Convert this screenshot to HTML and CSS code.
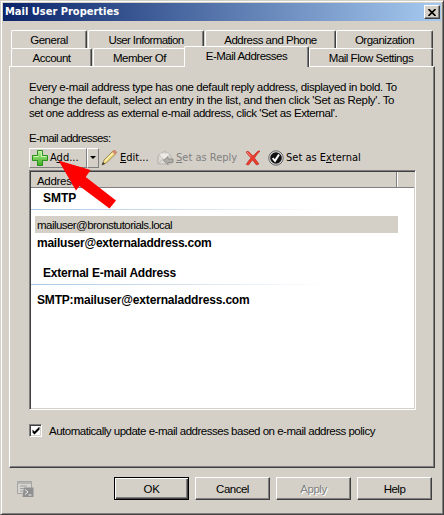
FILE: index.html
```html
<!DOCTYPE html>
<html lang="en">
<head>
<meta charset="utf-8">
<title>Mail User Properties</title>
<link rel="stylesheet" href="styles.css">
</head>
<body>
<main class="window">
  <header class="titlebar"><h1>Mail User Properties</h1>
    <button class="close" aria-label="Close"><svg width="8" height="7" viewBox="0 0 8 7"><path d="M0.5 0L7.5 7M7.5 0L.5 7" stroke="#000" stroke-width="1.6"/></svg></button>
  </header>
  <nav class="tabs">
    <div class="tab-row back">
      <div class="tab general">General</div><div class="tab info">User Information</div><div class="tab phone">Address and Phone</div><div class="tab org">Organization</div>
    </div>
    <div class="tab-row front">
      <div class="tab account">Account</div><div class="tab member">Member Of</div><div class="tab active">E-Mail Addresses</div><div class="tab flow">Mail Flow Settings</div>
    </div>
  </nav>
  <section class="panel">
    <p class="intro"><span class="l1">Every e-mail address type has one default reply address, displayed in bold. To</span><br><span class="l2">change the default, select an entry in the list, and then click 'Set as Reply'. To</span><br><span class="l3">set one address as external e-mail address, click 'Set as External'.</span></p>
    <div class="list-label">E-mail addresses:</div>
    <div class="toolbar">
      <div class="add"><svg width="18" height="18" viewBox="0 0 18 18"><defs><linearGradient id="g" x2="0" y2="1"><stop stop-color="#b8ef91"/><stop offset="1" stop-color="#3dad25"/></linearGradient></defs><path d="M6.5 1.5h5v5h5v5h-5v5h-5v-5h-5v-5h5z" fill="url(#g)" stroke="#279318"/><path d="M7.6 2.6h2.8v5h5M2.6 7.6h5" fill="none" stroke="#d5f7bb"/></svg><span>A<u>d</u>d...</span></div>
      <div class="split"></div>
      <div class="edit"><svg width="17" height="17" viewBox="0 0 17 17"><path d="M1 16L3 11L12.5 1.5Q15 .8 15.5 4L5.8 13.5z" fill="#f3dc83" stroke="#8c7843" stroke-width=".8"/><path d="M4 12L12.5 3.5" stroke="#fff8c8"/><path d="M12.5 1.5Q15 .8 15.5 4L14 5.5L11 3z" fill="#d78a72"/><path d="M1 16l1-3 2 2z" fill="#333"/></svg><span><u>E</u>dit...</span></div>
      <div class="reply"><svg width="17" height="15" viewBox="0 0 17 15"><path d="M1 6L7.5 1L14 6V14H1z" fill="#dedbd5" stroke="#b4b1aa"/><path d="M3 6V3h9v4L7.5 10z" fill="#eceae5" stroke="#c4c1ba" stroke-width=".7"/><path d="M1 14l5-5 3 2" fill="none" stroke="#bbb"/><path d="M6.5 10.5L11 6.5V9h5v3.5h-5v2z" fill="#b0afab" stroke="#85847f" stroke-width=".8"/></svg><span><u>S</u>et as Reply</span></div>
      <div class="delete"><svg width="16" height="16" viewBox="0 0 16 16"><path d="M1 2Q3 0 5 3L8 6L13 1L15 1Q12 4 9.5 8L14 14L11.5 15L7.5 10L3.5 15L1.2 14.5Q3 11 6 8Q3 5 1 2z" fill="#eb3b2e" stroke="#b9271d" stroke-width=".6"/><path d="M2 2l4 4.5" stroke="#ff9b8b"/></svg></div>
      <div class="external"><svg width="16" height="16" viewBox="0 0 16 16"><circle cx="8" cy="8" r="7.2" fill="#ddd" stroke="#646464"/><circle cx="8" cy="8" r="5.8" fill="#111"/><path d="M4.7 8.2L7 10.8L11 4.5" fill="none" stroke="#fff" stroke-width="2"/></svg><span>Set as E<u>x</u>ternal</span></div>
      <svg class="pointer" width="60" height="51" viewBox="0 0 60 51"><path d="M.5 1.5L32.7 11L27.7 18L58 41.5L51.5 49.5L21.5 27L18 31.5z" fill="#f00"/></svg>
    </div>
    <div class="list">
      <div class="list-head"><div class="column">Address</div></div>
      <div class="group first"><span>SMTP</span></div>
      <div class="entry selected"><span>mailuser@bronstutorials.local</span></div>
      <div class="entry bold"><span>mailuser@externaladdress.com</span></div>
      <div class="group second"><span>External E-mail Address</span></div>
      <div class="entry bold last"><span>SMTP:mailuser@externaladdress.com</span></div>
    </div>
    <div class="policy"><div class="check"><svg width="8" height="8" viewBox="0 0 8 8"><path d="M.5 2.5v3l2 2 5-5v-3l-5 5z" fill="#000"/></svg></div><span>Automatically update e-mail addresses based on e-mail address policy</span></div>
  </section>
  <footer class="actions">
    <svg class="shell" width="17" height="17" viewBox="0 0 17 17"><path d="M.5.5h14v12H.5z" fill="#d6d5d1" stroke="#a5a5a3"/><path d="M1 2h13" stroke="#969694"/><path d="M3 5h7M3 7.5h5M3 10h4" stroke="#a0a09e"/><path d="M7 6.5h9.5v9.5H5.5z" fill="#8f908f"/><path d="M8 8.5l3 2.5-3 2.5M11.5 14h3" fill="none" stroke="#eee"/></svg>
    <button class="ok"><span>OK</span></button><button>Cancel</button><button class="disabled">Apply</button><button>Help</button>
  </footer>
</main>
</body>
</html>
```
FILE: styles.css
```css
* { box-sizing: border-box; }
body { margin: 0; background: #d4d0c8; color: #000; font: 11.5px/13px "Liberation Sans", sans-serif; }
u { text-underline-offset: 1px; text-decoration-thickness: 1px; }
.window { width: 444px; height: 515px; padding: 1px; background: #d4d0c8; border: 1px solid; border-color: #d4d0c8 #404040 #404040 #d4d0c8; box-shadow: inset 1px 1px #fff, inset -1px -1px #808080; }
.titlebar { height: 18px; margin: 1px 1px 0; display: flex; align-items: center; justify-content: space-between; background: linear-gradient(90deg, #0a246a, #a6caf0); }
h1 { margin: 0 0 0 2px; color: #fff; font: bold 11px/18px "DejaVu Sans Condensed", "DejaVu Sans", sans-serif; font-stretch: condensed; white-space: nowrap; }
button { font: inherit; border-radius: 0; }
.close { width: 16px; height: 14px; margin-right: 1px; padding: 0; display: grid; place-items: center; background: #d4d0c8; border: 1px solid; border-color: #fff #404040 #404040 #fff; box-shadow: inset -1px -1px #808080; }
.tabs { margin: 9px 0 0 9px; }
.tab-row { display: flex; white-space: nowrap; }
.tab { height: 18px; text-align: center; line-height: 19px; border: 1px solid; border-color: #fff #404040 transparent #fff; border-bottom: 0; border-radius: 2px 2px 0 0; box-shadow: inset -1px 0 #808080; letter-spacing: -.5px; }
.general { width: 76px; }
.info { width: 116px; margin-left: 1px; letter-spacing: -.63px; }
.phone { width: 131px; margin-left: 1px; }
.org { width: 97px; }
.account { width: 81px; }
.member { width: 92px; margin-left: 1px; box-shadow: none; border-right: 0; }
.active { width: 125px; height: 21px; margin: -2px 0 -1px -1px; background: #d4d0c8; position: relative; z-index: 1; }
.flow { width: 124px; }
.panel { width: 426px; height: 402px; margin-left: 7px; padding: 14px 17px 0 19px; border: 1px solid; border-color: #fff #404040 #404040 #fff; box-shadow: inset -1px -1px #808080; white-space: nowrap; }
.intro { margin: 0; height: 39px; }
.l1 { letter-spacing: -.38px; }
.l2 { letter-spacing: -.33px; }
.l3 { letter-spacing: -.43px; }
.list-label { margin-top: 12px; letter-spacing: -.62px; }
.toolbar { height: 21px; margin-top: 2px; display: flex; align-items: center; position: relative; font: 11px/18px "DejaVu Sans Condensed", "DejaVu Sans", sans-serif; font-stretch: condensed; }
.toolbar > div { display: flex; align-items: center; }
.add { width: 58px; height: 20px; padding-left: 1px; border: 1px solid; border-color: #fff #808080 #808080 #fff; }
.add span { margin-left: 1px; }
.split { width: 12px; height: 20px; justify-content: center; border: 1px solid; border-color: #fff #808080 #808080 #fff; }
.split::after { content: ""; border: 3px solid transparent; border-top-color: #000; border-bottom: 0; }
.edit { margin-left: 2px; width: 56px; }
.edit span { margin-left: 2px; }
.reply { width: 88px; color: #808080; }
.reply span { margin-left: 2px; }
.delete { width: 23px; }
.external span { margin-left: 2px; }
.pointer { position: absolute; left: 29px; top: 12px; z-index: 2; }
.list { width: 387px; height: 240px; margin-top: 2px; background: #fff; border: 1px solid; border-color: #808080 #fff #fff #808080; box-shadow: inset 1px 1px #404040, inset -1px -1px #d4d0c8; padding: 1px; }
.list-head { height: 16px; background: #d4d0c8; border-bottom: 1px solid #808080; }
.column { height: 15px; width: 366px; padding-left: 6px; line-height: 18px; letter-spacing: -.3px; border-right: 1px solid #808080; box-shadow: 1px 0 #fff; }
.group { height: 22px; padding: 4px 0 0 12px; font-size: 12px; font-weight: bold; background: linear-gradient(90deg, #a9c7e4, #fff) 0 100% / 296px 1px no-repeat; }
.selected { width: 363px; height: 17px; margin: 6px 0 0 4px; padding: 3px 0 0 2px; background: #d4d0c8; letter-spacing: -.55px; }
.bold { margin: 4px 0 0 6px; font-size: 12px; font-weight: bold; letter-spacing: -.24px; }
.second { height: 22px; margin-top: 13px; letter-spacing: -.2px; }
.last { margin-top: 9px; letter-spacing: -.18px; }
.policy { display: flex; align-items: center; height: 13px; margin-top: 14px; letter-spacing: -.49px; }
.check { flex: none; width: 13px; height: 13px; background: #fff; display: grid; place-items: center; border: 1px solid; border-color: #808080 #fff #fff #808080; box-shadow: inset 1px 1px #404040, inset -1px -1px #d4d0c8; }
.policy span { margin: 1px 0 0 7px; }
.actions { display: flex; height: 23px; margin: 9px 0 0 15px; gap: 6px; }
.shell { margin: 4px 74px 0 0; }
.actions button { width: 75px; height: 23px; padding: 1px 0 0; color: #000; letter-spacing: -.5px; background: #d4d0c8; border: 1px solid; border-color: #fff #404040 #404040 #fff; box-shadow: inset -1px -1px #808080; }
.actions .ok { letter-spacing: -.2px; border-color: #000; box-shadow: inset 1px 1px #fff, inset -1px -1px #404040, inset -2px -2px #808080; }
.actions .disabled { color: #808080; text-shadow: 1px 1px #fff; }
```
